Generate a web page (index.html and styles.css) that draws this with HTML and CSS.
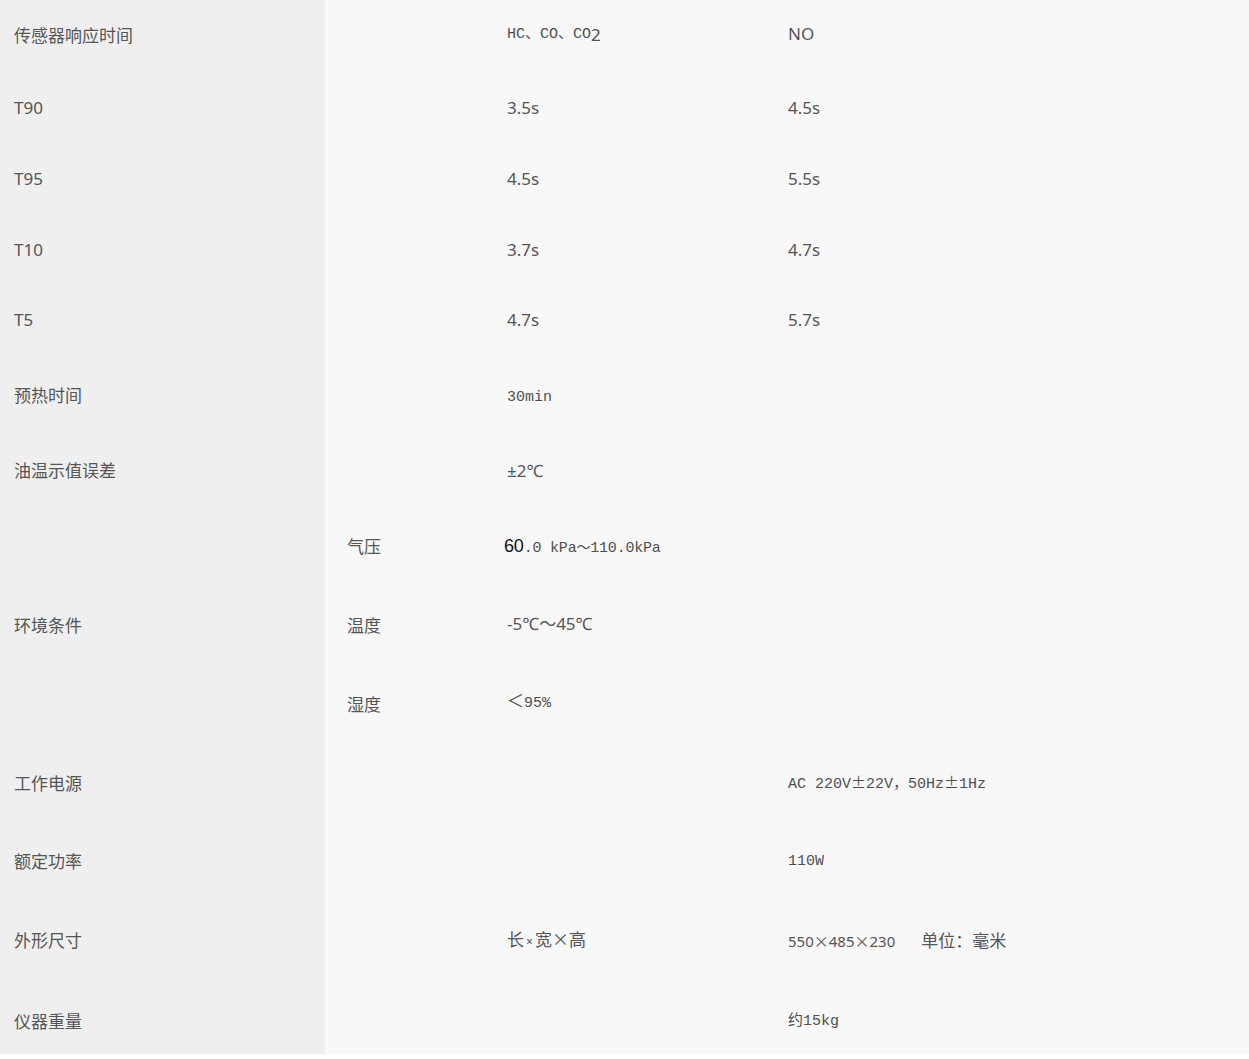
FILE: index.html
```html
<!DOCTYPE html>
<html lang="zh-CN">
<head>
<meta charset="utf-8">
<title>技术参数</title>
<link rel="stylesheet" href="styles.css">
</head>
<body>
<table class="spec">
  <colgroup>
    <col class="c1"><col class="c2"><col class="c3"><col class="c4">
  </colgroup>
  <tbody>
    <tr class="r72"><th>传感器响应时间</th><td></td><td class="mono up">HC、CO、CO<span class="sub">2</span></td><td class="sans up">NO</td></tr>
    <tr class="r72"><th>T90</th><td></td><td class="sans">3.5s</td><td class="sans">4.5s</td></tr>
    <tr class="r70"><th>T95</th><td></td><td class="sans">4.5s</td><td class="sans">5.5s</td></tr>
    <tr class="r71"><th>T10</th><td></td><td class="sans">3.7s</td><td class="sans">4.7s</td></tr>
    <tr class="r73 shift-up"><th>T5</th><td></td><td class="sans">4.7s</td><td class="sans">5.7s</td></tr>
    <tr class="r75"><th>预热时间</th><td></td><td class="mono down">30min</td><td></td></tr>
    <tr class="r75"><th>油温示值误差</th><td></td><td class="sans">±2℃</td><td></td></tr>
    <tr class="r78"><th rowspan="3">环境条件</th><td class="sans">气压</td><td class="mono pressure"><span class="dark">60</span>.0 kPa<span class="fw">～</span>110.0kPa</td><td></td></tr>
    <tr class="r79"><td class="sans">温度</td><td class="sans up">-5℃<span class="fw">～</span>45℃</td><td></td></tr>
    <tr class="r79"><td class="sans">湿度</td><td class="mono up"><span class="sans">＜</span>95%</td><td></td></tr>
    <tr class="r79"><th>工作电源</th><td></td><td></td><td class="mono">AC 220V<span class="fw">±</span>22V<span class="fw">，</span>50Hz<span class="fw">±</span>1Hz</td></tr>
    <tr class="r78"><th>额定功率</th><td></td><td></td><td class="mono">110W</td></tr>
    <tr class="r79"><th>外形尺寸</th><td></td><td class="sans">长<span class="small">×</span>宽<span class="fw">×</span>高</td><td class="sans"><span class="dims">550<span class="fw">×</span>485<span class="fw">×</span>230</span><span class="unit">单位：毫米</span></td></tr>
    <tr class="r74 last"><th>仪器重量</th><td></td><td></td><td class="mono">约15kg</td></tr>
  </tbody>
</table>
</body>
</html>
```
FILE: styles.css
```css
html, body {
  margin: 0;
  padding: 0;
  background: #ffffff;
}

.spec {
  width: 1249px;
  border-collapse: collapse;
  table-layout: fixed;
  background: #f8f8f8;
  color: #555555;
  font-family: "Noto Sans", "Noto Sans CJK SC", sans-serif;
  font-size: 17px;
}

.c1 { width: 325px; }
.c2 { width: 160px; }
.c3 { width: 281px; }
.c4 { width: auto; }

.spec th,
.spec td {
  padding: 0 0 0 22px;
  vertical-align: middle;
  text-align: left;
  font-weight: normal;
  line-height: 24px;
  white-space: nowrap;
}

.spec th {
  background: #efefef;
  padding-left: 14px;
}

.r70 { height: 70px; }
.r71 { height: 71px; }
.r72 { height: 72px; }
.r73 { height: 73px; }
.r74 { height: 74px; }
.r75 { height: 75px; }
.r78 { height: 78px; }
.r79 { height: 79px; }

.spec td.up {
  padding-bottom: 5px;
}

.spec td.down {
  padding-top: 5px;
}

.shift-up th,
.shift-up td {
  padding-bottom: 4px;
}

.last th,
.last td {
  padding-top: 10px;
}

.sans {
  font-family: "Noto Sans", "Noto Sans CJK SC", sans-serif;
  font-size: 17px;
}

.mono {
  font-family: "Liberation Mono", "Noto Sans CJK SC", monospace;
  font-size: 15px;
  color: #4f4f4f;
}

.fw {
  font-family: "Noto Sans CJK SC", sans-serif;
  font-feature-settings: "fwid";
}

.pressure {
  letter-spacing: -0.2px;
}

.pressure .fw {
  font-size: 14px;
}

.spec td.pressure {
  padding-left: 19px;
}

.sub {
  font-family: "Noto Sans", sans-serif;
  font-size: 17px;
  position: relative;
  top: 3px;
}

.dark {
  font-family: "Liberation Sans", sans-serif;
  font-size: 18px;
  color: #111111;
}

.small {
  font-size: 12px;
  margin: 0 2px;
}

.dims {
  font-size: 15px;
}

.unit {
  margin-left: 26px;
}
```
